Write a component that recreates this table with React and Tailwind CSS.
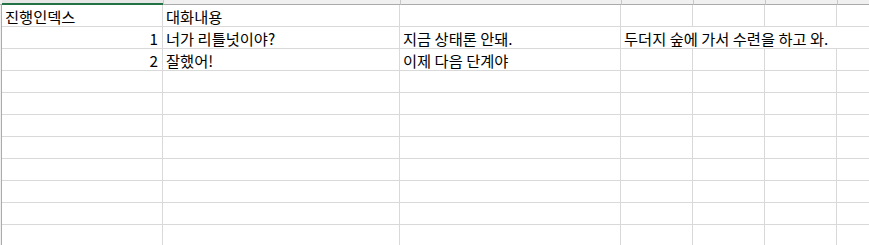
import React from "react";

// Sheet columns: width includes the 1px right grid line
const COLS = [161, 237, 221, 72, 72, 72, 72];

const ROWS = [
  [{ t: "진행인덱스" }, { t: "대화내용" }, null, null, null, null, null],
  [{ t: "1", right: true }, { t: "너가 리틀넛이야?" }, { t: "지금 상태론 안돼." }, { t: "두더지 숲에 가서 수련을 하고 와.", span: 4 }],
  [{ t: "2", right: true }, { t: "잘했어!" }, { t: "이제 다음 단계야" }, null, null, null, null],
];

const TOTAL_ROWS = 11;

function Row({ cells }) {
  const out = [];
  let ci = 0;
  for (const cell of cells) {
    const span = cell && cell.span ? cell.span : 1;
    const w = COLS.slice(ci, ci + span).reduce((a, b) => a + b, 0);
    out.push(
      <div
        key={ci}
        style={{ width: w }}
        className={
          "shrink-0 h-full border-r border-[#d9d9d9] flex items-center px-[3px] pt-[1px] whitespace-nowrap " +
          (cell && cell.right ? "justify-end pr-[4px]" : "justify-start")
        }
      >
        {cell ? cell.t : ""}
      </div>
    );
    ci += span;
  }
  return <div className="flex h-[22px] border-b border-[#d9d9d9]">{out}</div>;
}

export default function App() {
  const rows = [];
  for (let i = 0; i < TOTAL_ROWS; i++) {
    rows.push(ROWS[i] || [null, null, null, null, null, null, null]);
  }
  return (
    <div
      className="w-[869px] h-[245px] overflow-hidden bg-white text-black text-[15.3px]"
      style={{ fontFamily: '"Malgun Gothic", "Noto Sans CJK KR", sans-serif' }}
    >
      {/* column header strip */}
      <div className="flex h-[5px]">
        <div className="w-[2px] shrink-0 bg-[#f0f0f0] border-b border-[#ababab]" />
        <div className="w-[161px] shrink-0 bg-[#e6e6e6] border-b-2 border-[#217346]" />
        <div className="w-[237px] shrink-0 bg-[#f0f0f0] border-l border-b border-[#c8c8c8] border-b-[#ababab]" />
        <div className="w-[221px] shrink-0 bg-[#f0f0f0] border-l border-b border-[#c8c8c8] border-b-[#ababab]" />
        <div className="w-[72px] shrink-0 bg-[#f0f0f0] border-l border-b border-[#c8c8c8] border-b-[#ababab]" />
        <div className="w-[72px] shrink-0 bg-[#f0f0f0] border-l border-b border-[#c8c8c8] border-b-[#ababab]" />
        <div className="w-[72px] shrink-0 bg-[#f0f0f0] border-l border-b border-[#c8c8c8] border-b-[#ababab]" />
        <div className="flex-1 bg-[#f0f0f0] border-l border-b border-[#c8c8c8] border-b-[#ababab]" />
      </div>
      <div className="flex">
        {/* row header edge */}
        <div className="w-[2px] shrink-0 flex">
          <div className="w-[1px] bg-[#f0f0f0]" />
          <div className="w-[1px] bg-[#ababab]" />
        </div>
        <div className="flex flex-col">
          {rows.map((r, i) => (
            <Row key={i} cells={r} />
          ))}
        </div>
      </div>
    </div>
  );
}
